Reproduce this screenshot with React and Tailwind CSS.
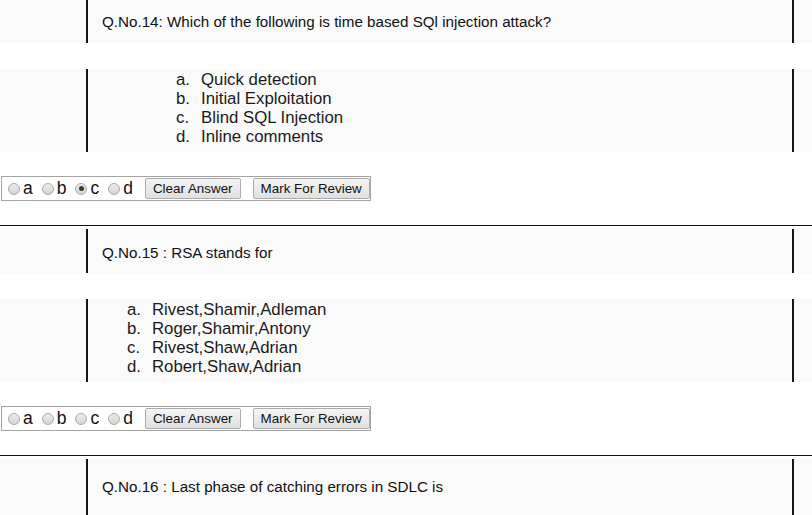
import React from "react";

const questions = [
  {
    no: "14",
    label: "Q.No.14: Which of the following is time based SQl injection attack?",
    options: ["Quick detection", "Initial Exploitation", "Blind SQL Injection", "Inline comments"],
    indent: "pl-[88px]",
    textPad: "pt-[3px]",
    answer: "c",
  },
  {
    no: "15",
    label: "Q.No.15 : RSA stands for",
    options: ["Rivest,Shamir,Adleman", "Roger,Shamir,Antony", "Rivest,Shaw,Adrian", "Robert,Shaw,Adrian"],
    indent: "pl-[39px]",
    textPad: "pt-[4px]",
    answer: null,
  },
  {
    no: "16",
    label: "Q.No.16 : Last phase of catching errors in SDLC is",
    options: null,
    textPad: "pt-0",
    answer: null,
  },
];

const letters = ["a", "b", "c", "d"];

// little grey radio like the old browser ones
const Radio = ({ checked }) => (
  <span className="w-[12px] h-[12px] rounded-full border border-[#a9a9a9] bg-gradient-to-b from-[#ececec] to-[#d4d4d4] flex items-center justify-center shrink-0">
    {checked && <span className="w-[5px] h-[5px] rounded-full bg-[#3a3a3a]" />}
  </span>
);

const Button = ({ children }) => (
  <button className="h-[21px] px-[7px] border border-[#acacac] rounded-[2px] bg-gradient-to-b from-[#f4f4f4] to-[#e0e0e0] text-[13.4px] leading-none text-[#111]">
    {children}
  </button>
);

const Question = ({ q }) => (
  <div>
    {/* Question row */}
    <div className={`flex bg-[#fafafa] ${q.options ? "h-[44px]" : "h-[56px]"}`}>
      <div className="w-[86px] shrink-0" />
      <div className={`w-[708px] shrink-0 border-x-2 border-[#161616] flex items-center pl-[14px] text-[15.2px] text-[#111] ${q.textPad}`}>
        {q.label}
      </div>
    </div>

    {q.options && (
      <>
        {/* Options */}
        <div className="mt-[26px] flex h-[83px] bg-[#fafafa]">
          <div className="w-[86px] shrink-0" />
          <div className={`w-[708px] shrink-0 border-x-2 border-[#161616] pt-[1px] text-[16.8px] leading-[19px] text-[#1a1a1a] ${q.indent}`}>
            {q.options.map((opt, i) => (
              <div key={i} className="flex">
                <span className="w-[25px] shrink-0">{letters[i]}.</span>
                <span>{opt}</span>
              </div>
            ))}
          </div>
        </div>

        {/* Answer bar */}
        <div className="mt-[24px] ml-[1px] w-[370px] h-[25px] border border-[#a4a4a4] flex items-center pl-[6px]">
          {letters.map((l) => (
            <label key={l} className="flex items-center mr-[9px] text-[17.5px] text-[#111]">
              <Radio checked={q.answer === l} />
              <span className="ml-[3px] leading-none">{l}</span>
            </label>
          ))}
          <div className="ml-[3px] flex gap-[12px]">
            <Button>Clear Answer</Button>
            <Button>Mark For Review</Button>
          </div>
        </div>

        <div className="mt-[24px] h-px bg-[#111]" />
        <div className="h-[3px]" />
      </>
    )}
  </div>
);

export default function App() {
  return (
    <div className="w-[812px] h-[515px] overflow-hidden bg-white font-['Liberation_Sans',Arial,sans-serif]">
      <div className="-mt-px">
        {questions.map((q) => (
          <Question key={q.no} q={q} />
        ))}
      </div>
    </div>
  );
}
